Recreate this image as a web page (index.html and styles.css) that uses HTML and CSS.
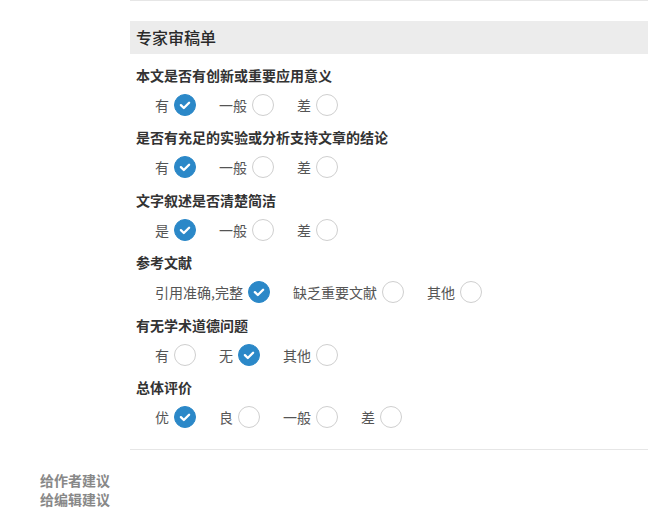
FILE: index.html
```html
<!DOCTYPE html>
<html lang="zh-CN">
<head>
    <meta charset="UTF-8">
    <title>专家审稿单</title>
    <link rel="stylesheet" href="styles.css">
</head>
<body>
    <div class="page">
        <div class="review">
            <h2 class="review-title">专家审稿单</h2>

            <div class="question">
                <div class="question-text">本文是否有创新或重要应用意义</div>
                <div class="options">
                    <label class="option">有<span class="radio checked"><svg viewBox="0 0 22 22"><path d="M6.5 11.2l3.2 3.1 5.8-5.8"/></svg></span></label>
                    <label class="option">一般<span class="radio"></span></label>
                    <label class="option">差<span class="radio"></span></label>
                </div>
            </div>

            <div class="question">
                <div class="question-text">是否有充足的实验或分析支持文章的结论</div>
                <div class="options">
                    <label class="option">有<span class="radio checked"><svg viewBox="0 0 22 22"><path d="M6.5 11.2l3.2 3.1 5.8-5.8"/></svg></span></label>
                    <label class="option">一般<span class="radio"></span></label>
                    <label class="option">差<span class="radio"></span></label>
                </div>
            </div>

            <div class="question">
                <div class="question-text">文字叙述是否清楚简洁</div>
                <div class="options">
                    <label class="option">是<span class="radio checked"><svg viewBox="0 0 22 22"><path d="M6.5 11.2l3.2 3.1 5.8-5.8"/></svg></span></label>
                    <label class="option">一般<span class="radio"></span></label>
                    <label class="option">差<span class="radio"></span></label>
                </div>
            </div>

            <div class="question">
                <div class="question-text">参考文献</div>
                <div class="options">
                    <label class="option">引用准确,完整<span class="radio checked"><svg viewBox="0 0 22 22"><path d="M6.5 11.2l3.2 3.1 5.8-5.8"/></svg></span></label>
                    <label class="option">缺乏重要文献<span class="radio"></span></label>
                    <label class="option">其他<span class="radio"></span></label>
                </div>
            </div>

            <div class="question">
                <div class="question-text">有无学术道德问题</div>
                <div class="options">
                    <label class="option">有<span class="radio"></span></label>
                    <label class="option">无<span class="radio checked"><svg viewBox="0 0 22 22"><path d="M6.5 11.2l3.2 3.1 5.8-5.8"/></svg></span></label>
                    <label class="option">其他<span class="radio"></span></label>
                </div>
            </div>

            <div class="question">
                <div class="question-text">总体评价</div>
                <div class="options">
                    <label class="option">优<span class="radio checked"><svg viewBox="0 0 22 22"><path d="M6.5 11.2l3.2 3.1 5.8-5.8"/></svg></span></label>
                    <label class="option">良<span class="radio"></span></label>
                    <label class="option">一般<span class="radio"></span></label>
                    <label class="option">差<span class="radio"></span></label>
                </div>
            </div>
        </div>

        <div class="advice">
            <div class="advice-label">给作者建议</div>
            <div class="advice-label">给编辑建议</div>
        </div>
    </div>
</body>
</html>
```

FILE: styles.css
```css
body {
    margin: 0;
    padding: 0;
    font-family: "Noto Sans CJK SC", "Liberation Sans", sans-serif;
    font-size: 14px;
    color: #333;
    background: #fff;
}
.review {
    margin-left: 130px;
    border-top: 1px solid #e6e6e6;
    border-bottom: 1px solid #e6e6e6;
    padding-top: 20px;
    padding-bottom: 20px;
}
.review-title {
    margin: 0;
    height: 33px;
    line-height: 33px;
    padding-left: 6px;
    background: #ececec;
    font-size: 16px;
    font-weight: 500;
    color: #2a2a2a;
}
.question {
    padding: 0 6px;
}
.question-text {
    margin-top: 10.5px;
    height: 20px;
    line-height: 20px;
    font-weight: bold;
    color: #333;
}
.options {
    display: flex;
    align-items: center;
    gap: 23px;
    height: 24px;
    margin-top: 8px;
    padding-left: 19px;
}
.option {
    display: flex;
    align-items: center;
    gap: 5px;
    color: #555;
    line-height: 20px;
}
.radio {
    display: inline-block;
    box-sizing: border-box;
    width: 22px;
    height: 22px;
    border: 1px solid #cfcfcf;
    border-radius: 50%;
    background: #fff;
}
.radio.checked {
    border-color: #2b88c8;
    background: #2b88c8;
}
.radio svg {
    display: block;
    width: 20px;
    height: 20px;
}
.radio svg path {
    fill: none;
    stroke: #fff;
    stroke-width: 2.6;
    stroke-linecap: round;
    stroke-linejoin: round;
}
.advice {
    width: 110px;
    padding-top: 21px;
    text-align: right;
}
.advice-label {
    line-height: 19px;
    font-weight: bold;
    color: #888;
}
```
